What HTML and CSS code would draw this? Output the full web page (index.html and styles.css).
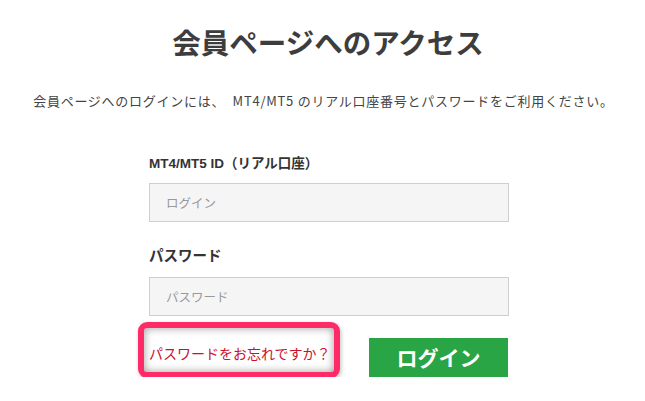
FILE: index.html
```html
<!DOCTYPE html>
<html lang="ja">
<head>
<meta charset="utf-8">
<title>会員ページへのアクセス</title>
<link rel="stylesheet" href="styles.css">
</head>
<body>
<main class="page">
  <h1 class="title">会員ページへのアクセス</h1>
  <p class="lead">会員ページへのログインには、　MT4/MT5 のリアル口座番号とパスワードをご利用ください。</p>
  <form class="form">
    <label class="label label-id" for="login">MT4/MT5 ID（リアル口座）</label>
    <input class="field" id="login" type="text" placeholder="ログイン">
    <label class="label label-pw" for="pw">パスワード</label>
    <input class="field" id="pw" type="password" placeholder="パスワード">
    <div class="actions">
      <span class="forgot-wrap">
        <a class="forgot" href="#">パスワードをお忘れですか？</a>
        <span class="highlight" aria-hidden="true"></span>
      </span>
      <button class="submit" type="button">ログイン</button>
    </div>
  </form>
</main>
</body>
</html>
```
FILE: styles.css
```css
html, body {
  margin: 0;
  padding: 0;
  background: #ffffff;
}
body {
  font-family: "Noto Sans CJK JP", "Noto Sans", sans-serif;
  color: #444;
}
.page {
  width: 645px;
  padding-top: 22px;
}
.title {
  margin: 0;
  padding-left: 11px;
  font-size: 28.5px;
  line-height: 40px;
  font-weight: 700;
  color: #3d3d3d;
  text-align: center;
}
.lead {
  margin: 29px 0 0;
  padding-left: 2px;
  font-size: 13px;
  line-height: 20px;
  letter-spacing: 0.75px;
  color: #444;
  text-align: center;
}
.form {
  width: 360px;
  margin-left: 149px;
  display: flex;
  flex-direction: column;
}
.label {
  display: block;
  font-family: "Liberation Sans", "Noto Sans CJK JP", sans-serif;
  font-weight: 700;
  font-size: 14px;
  line-height: 20px;
  color: #333;
}
.label-id {
  margin-top: 43px;
  margin-bottom: 9px;
  font-size: 13.5px;
}
.label-pw {
  margin-top: 24px;
  margin-bottom: 11px;
  font-size: 14.5px;
}
.field {
  box-sizing: border-box;
  width: 360px;
  height: 39px;
  margin: 0;
  padding: 0 16px;
  background: #f5f5f5;
  border: 1px solid #cfcfcf;
  border-radius: 0;
  font-family: "Noto Sans CJK JP", sans-serif;
  font-size: 12.5px;
  color: #333;
  outline: none;
}
.field::placeholder {
  color: #999;
}
.actions {
  margin-top: 22px;
  display: flex;
  justify-content: space-between;
  align-items: flex-start;
}
.forgot-wrap {
  position: relative;
  margin-top: 2px;
}
.forgot {
  font-size: 14px;
  line-height: 20px;
  color: #cc1030;
  text-decoration: none;
}
.highlight {
  position: absolute;
  left: -11px;
  top: -18px;
  width: 202px;
  height: 56px;
  box-sizing: border-box;
  border: 6px solid #ff2a68;
  border-radius: 9px;
  box-shadow: inset 0 0 8px rgba(0, 0, 0, 0.4), 1px 2px 4px rgba(0, 0, 0, 0.25);
  pointer-events: none;
}
.submit {
  width: 139px;
  height: 39px;
  margin: 0 1px 0 0;
  padding: 0;
  border: none;
  background: #29a545;
  color: #ffffff;
  font-family: "Noto Sans CJK JP", sans-serif;
  font-weight: 700;
  font-size: 21px;
  line-height: 39px;
  cursor: pointer;
}
```
